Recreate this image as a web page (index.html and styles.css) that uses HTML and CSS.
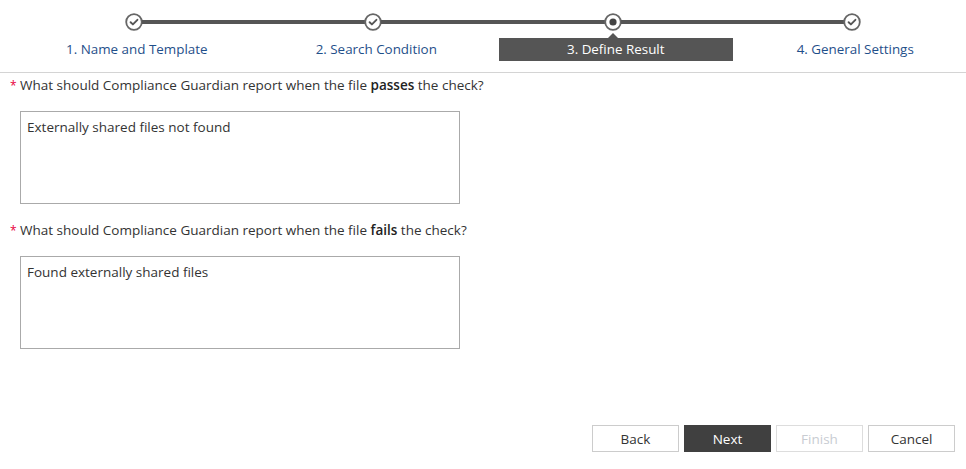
FILE: index.html
```html
<!DOCTYPE html>
<html>
<head>
<meta charset="utf-8">
<link rel="stylesheet" href="styles.css">
</head>
<body>
<div class="page">
  <header class="wizard">
    <div class="track">
      <span class="step-icon done"><svg viewBox="0 0 18 18" width="18" height="18"><circle cx="9" cy="9" r="7.8" fill="#fff" stroke="#666" stroke-width="1.8"/><path d="M5.6 9.2 L7.9 11.4 L12.4 6.8" fill="none" stroke="#555" stroke-width="1.9" stroke-linecap="round" stroke-linejoin="round"/></svg></span>
      <span class="track-line"></span>
      <span class="step-icon done"><svg viewBox="0 0 18 18" width="18" height="18"><circle cx="9" cy="9" r="7.8" fill="#fff" stroke="#666" stroke-width="1.8"/><path d="M5.6 9.2 L7.9 11.4 L12.4 6.8" fill="none" stroke="#555" stroke-width="1.9" stroke-linecap="round" stroke-linejoin="round"/></svg></span>
      <span class="track-line"></span>
      <span class="step-icon current"><svg viewBox="0 0 18 18" width="18" height="18"><circle cx="9" cy="9" r="7.8" fill="#fff" stroke="#666" stroke-width="1.8"/><circle cx="9" cy="9" r="3.6" fill="#444"/></svg></span>
      <span class="track-line"></span>
      <span class="step-icon done"><svg viewBox="0 0 18 18" width="18" height="18"><circle cx="9" cy="9" r="7.8" fill="#fff" stroke="#666" stroke-width="1.8"/><path d="M5.6 9.2 L7.9 11.4 L12.4 6.8" fill="none" stroke="#555" stroke-width="1.9" stroke-linecap="round" stroke-linejoin="round"/></svg></span>
    </div>
    <nav class="labels">
      <div class="label">1. Name and Template</div>
      <div class="label">2. Search Condition</div>
      <div class="label active">3. Define Result</div>
      <div class="label">4. General Settings</div>
    </nav>
  </header>

  <main class="form">
    <div class="field">
      <div class="question"><span class="req">*</span>What should Compliance Guardian report when the file <b>passes</b> the check?</div>
      <div class="textbox">Externally shared files not found</div>
    </div>
    <div class="field">
      <div class="question"><span class="req">*</span>What should Compliance Guardian report when the file <b>fails</b> the check?</div>
      <div class="textbox">Found externally shared files</div>
    </div>
  </main>

  <footer class="actions">
    <button class="btn">Back</button>
    <button class="btn primary">Next</button>
    <button class="btn disabled">Finish</button>
    <button class="btn">Cancel</button>
  </footer>
</div>
</body>
</html>
```

FILE: styles.css
```css
* { box-sizing: border-box; }
html, body {
  margin: 0;
  padding: 0;
  background: #fff;
  overflow: hidden;
}
body {
  font-family: "Open Sans", "Noto Sans", sans-serif;
  font-size: 13.5px;
  color: #333;
  width: 966px;
  height: 469px;
}
.page {
  display: flex;
  flex-direction: column;
  height: 469px;
}
.wizard {
  border-bottom: 1px solid #d4d4d4;
  height: 73px;
  padding-top: 13px;
}
.track {
  display: flex;
  align-items: center;
  margin-left: 125px;
  width: 736px;
  height: 18px;
}
.step-icon {
  width: 18px;
  height: 18px;
  flex: none;
  display: block;
}
.step-icon svg { display: block; }
.track-line {
  flex: 1;
  height: 4px;
  background: #555;
  margin: 0 -1px;
}
.labels {
  display: grid;
  grid-template-columns: repeat(4, 239.5px);
  margin-left: 17px;
  margin-top: 7px;
}
.label {
  height: 23px;
  line-height: 23px;
  text-align: center;
  color: #1f4f8a;
  font-size: 13.4px;
  margin: 0 3px;
  position: relative;
}
.label.active {
  background: #555;
  color: #fff;
}
.label.active::before {
  content: "";
  position: absolute;
  left: 50%;
  top: -5px;
  margin-left: -8px;
  border-left: 5px solid transparent;
  border-right: 5px solid transparent;
  border-bottom: 5px solid #555;
}
.form {
  padding: 3px 0 0 10px;
  flex: 1;
}
.field { margin-bottom: 17px; }
.question {
  line-height: 19px;
  font-size: 13.5px;
  color: #333;
}
.question b { font-weight: 600; color: #222; }
.req {
  color: #e8003a;
  display: inline-block;
  width: 10px;
  font-size: 12px;
}
.textbox {
  margin: 16px 0 0 10px;
  width: 440px;
  height: 93px;
  border: 1px solid #aaa;
  padding: 6px 6px;
  line-height: 19px;
  color: #333;
  font-size: 13.5px;
}
.actions {
  display: flex;
  justify-content: flex-end;
  gap: 5px;
  padding: 0 11px 17px 0;
}
.btn {
  width: 87px;
  height: 27px;
  border: 1px solid #ccc;
  background: #fff;
  font-family: inherit;
  font-size: 13.5px;
  color: #333;
  padding: 0;
}
.btn.primary {
  background: #404040;
  border-color: #404040;
  color: #fff;
}
.btn.disabled {
  color: #c8ccd2;
  border-color: #ddd;
}
```
